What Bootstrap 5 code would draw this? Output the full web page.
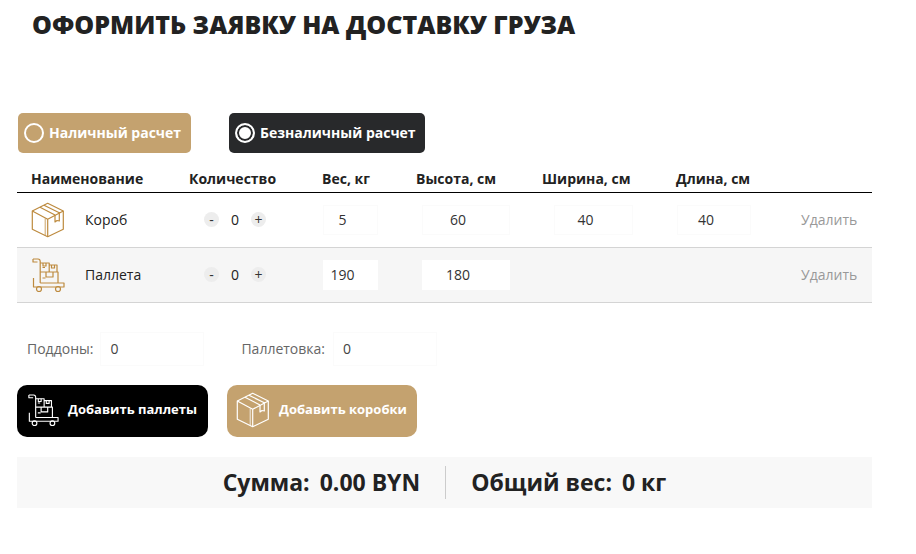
<!DOCTYPE html>
<html lang="ru">
<head>
    <meta charset="UTF-8">
    <meta name="viewport" content="width=device-width, initial-scale=1.0">
    <title>Оформить заявку</title>
    <link href="https://cdn.jsdelivr.net/npm/bootstrap@5.3.0/dist/css/bootstrap.min.css" rel="stylesheet">
    <style>
        body {
            font-family: "Open Sans", sans-serif;
            font-size: 14px;
            color: #222;
            background: #fff;
        }
        .order-page {
            width: 855px;
            margin-left: 17px;
        }
        .order-title {
            font-size: 25px;
            font-weight: 800;
            line-height: 33px;
            margin: 8px 0 0 15px;
            color: #222;
        }
        .pay-row {
            margin-top: 72px;
            gap: 38px;
        }
        .pay-btn {
            display: flex;
            align-items: center;
            height: 40px;
            border-radius: 5px;
            padding: 0 0 0 6px;
            color: #fff;
            font-weight: 700;
            font-size: 14px;
            gap: 5px;
            white-space: nowrap;
            line-height: 19px;
        }
        .pay-btn b { font-weight: 700; margin-top: -1px; }
        .pay-tan { margin-left: 1px; width: 173px; background: #c4a26f; }
        .pay-dark { width: 196px; background: #28292b; }
        .pay-ring {
            width: 20px;
            height: 20px;
            border-radius: 50%;
            border: 2px solid #fff;
            flex-shrink: 0;
        }
        .pay-dark .pay-ring {
            background: #fff;
            box-shadow: inset 0 0 0 2px #28292b;
        }
        .cargo-table {
            table-layout: fixed;
            width: 855px;
            margin: 15px 0 0;
            --bs-table-bg: transparent;
            color: #222;
        }
        .cargo-table th {
            font-size: 14px;
            font-weight: 700;
            padding: 0 0 2px 14px;
            height: 24px;
            border-bottom: 1px solid #000;
            vertical-align: middle;
            white-space: nowrap;
            color: #222;
        }
        .cargo-table td {
            height: 55px;
            padding: 0 0 0 14px;
            vertical-align: middle;
            border-bottom: 1px solid #d4d4d4;
        }
        .cargo-table tr.row-shade td { background: #f6f6f6; }
        .item-name { gap: 20px; }
        .item-icon { color: #bd8a3e; flex-shrink: 0; }
        .qty-box { margin-left: 15px; width: 62px; justify-content: space-between; }
        .qty-btn {
            width: 15px;
            height: 15px;
            border-radius: 50%;
            background: #ededed;
            border: 0;
            padding: 0;
            font-size: 14px;
            line-height: 15px;
            color: #333;
            text-align: center;
        }
        .dim-input {
            display: block;
            height: 30px;
            background: #fff;
            border: 1px solid #fbfbfb;
            padding: 0 16px 0 0;
            text-align: center;
            font-size: 14px;
            color: #333;
            outline: 0;
        }
        .row-shade .dim-input { border-color: #fff; }
        .dim-w { width: 55px; margin-left: 1px; }
        .dim-h { width: 88px; margin-left: 6px; }
        .dim-s { width: 79px; margin-left: 12px; }
        .dim-l { width: 74px; margin-left: 1px; }
        .del-link { color: #999; text-decoration: none; }
        .pallet-row {
            margin-top: 29px;
            margin-left: 10px;
            align-items: center;
        }
        .pallet-label { color: #666; margin-right: 7px; }
        .pallet-input {
            height: 34px;
            width: 104px;
            border: 1px solid #fbfbfb;
            background: #fff;
            padding: 0 0 0 9px;
            font-size: 14px;
            color: #444;
            outline: 0;
        }
        .pallet-gap { margin-left: 37px; margin-right: 8px; }
        .add-row { margin-top: 19px; gap: 19px; }
        .add-btn {
            height: 52px;
            border-radius: 10px;
            border: 0;
            color: #fff;
            font-size: 13px;
            font-weight: 700;
            display: flex;
            align-items: center;
            padding: 0 0 2px;
        }
        .add-black { width: 191px; background: #000; padding-left: 10px; gap: 9px; }
        .add-tan { width: 190px; background: #c4a26f; padding-left: 9px; gap: 9px; }
        .total-bar {
            margin-top: 20px;
            height: 51px;
            background: #f8f8f8;
            font-size: 23px;
            font-weight: 700;
            color: #222;
        }
        .total-label { margin-right: 10px; }
        .total-sep {
            width: 1px;
            height: 33px;
            background: #ccc;
            margin: 0 25px;
        }
    </style>
</head>
<body>
    <svg width="0" height="0" class="position-absolute">
        <symbol id="icon-box" viewBox="0 0 34 36">
            <g fill="none" stroke="currentColor" stroke-width="1.200" stroke-linejoin="round">
                <path d="M16.700 1.300 1.300 9v18.300l15.400 7.400 15.600-7.400V9z"/>
                <path d="M1.300 9l15.400 8.300L32.300 9M16.700 17.300v17.400"/>
                <path d="M14.300 16.500v16.800" stroke-opacity=".55" stroke-width="1.500"/>
                <path d="M9 5.300 24 13M13 3.300l15.300 7.400"/>
                <path d="M24 13v7l2-1.500 2.300.5v-9"/>
            </g>
        </symbol>
        <symbol id="icon-cart" viewBox="0 0 34 36">
            <g fill="none" stroke="currentColor" stroke-width="1.200" stroke-linejoin="round">
                <path d="M2 2h5c1.500 0 2.200 1 2.200 2.500V26"/>
                <path d="M2 2v3h4.500"/>
                <path d="M2.500 21v9H33v-4H9.200"/>
                <circle cx="8" cy="32" r="2.500"/>
                <circle cx="27" cy="32" r="2.500"/>
                <path d="M9.200 15H27v11M9.200 6h9v9M18.200 8H26v7M15 15v5h7v-5"/>
                <path d="M12 6v3h3V6M20.500 8v3h3V8M11.500 10.500h2.500M11.500 21h3"/>
            </g>
        </symbol>
    </svg>

    <div class="order-page">
        <h1 class="order-title">ОФОРМИТЬ ЗАЯВКУ НА ДОСТАВКУ ГРУЗА</h1>

        <div class="d-flex pay-row">
            <div class="pay-btn pay-tan"><span class="pay-ring"></span><b>Наличный расчет</b></div>
            <div class="pay-btn pay-dark"><span class="pay-ring"></span><b>Безналичный расчет</b></div>
        </div>

        <table class="table cargo-table">
            <colgroup>
                <col style="width: 158px">
                <col style="width: 133px">
                <col style="width: 94px">
                <col style="width: 126px">
                <col style="width: 134px">
                <col style="width: 125px">
                <col style="width: 85px">
            </colgroup>
            <thead>
                <tr>
                    <th>Наименование</th>
                    <th>Количество</th>
                    <th>Вес, кг</th>
                    <th>Высота, см</th>
                    <th>Ширина, см</th>
                    <th>Длина, см</th>
                    <th></th>
                </tr>
            </thead>
            <tbody>
                <tr>
                    <td>
                        <div class="d-flex align-items-center item-name">
                            <svg class="item-icon" width="34" height="36"><use href="#icon-box"/></svg>
                            <span>Короб</span>
                        </div>
                    </td>
                    <td>
                        <div class="d-flex align-items-center qty-box">
                            <button class="qty-btn">-</button><span>0</span><button class="qty-btn">+</button>
                        </div>
                    </td>
                    <td><input class="dim-input dim-w" type="text" value="5"></td>
                    <td><input class="dim-input dim-h" type="text" value="60"></td>
                    <td><input class="dim-input dim-s" type="text" value="40"></td>
                    <td><input class="dim-input dim-l" type="text" value="40"></td>
                    <td><a class="del-link" href="#">Удалить</a></td>
                </tr>
                <tr class="row-shade">
                    <td>
                        <div class="d-flex align-items-center item-name">
                            <svg class="item-icon" width="34" height="36"><use href="#icon-cart"/></svg>
                            <span>Паллета</span>
                        </div>
                    </td>
                    <td>
                        <div class="d-flex align-items-center qty-box">
                            <button class="qty-btn">-</button><span>0</span><button class="qty-btn">+</button>
                        </div>
                    </td>
                    <td><input class="dim-input dim-w" type="text" value="190"></td>
                    <td><input class="dim-input dim-h" type="text" value="180"></td>
                    <td></td>
                    <td></td>
                    <td><a class="del-link" href="#">Удалить</a></td>
                </tr>
            </tbody>
        </table>

        <div class="d-flex pallet-row">
            <span class="pallet-label">Поддоны:</span>
            <input class="pallet-input" type="text" value="0">
            <span class="pallet-label pallet-gap">Паллетовка:</span>
            <input class="pallet-input" type="text" value="0">
        </div>

        <div class="d-flex add-row">
            <button class="add-btn add-black">
                <svg width="32" height="34"><use href="#icon-cart"/></svg>
                Добавить паллеты
            </button>
            <button class="add-btn add-tan">
                <svg width="34" height="36"><use href="#icon-box"/></svg>
                Добавить коробки
            </button>
        </div>

        <div class="d-flex align-items-center justify-content-center total-bar">
            <span class="total-label">Сумма:</span>
            <span>0.00 BYN</span>
            <span class="total-sep"></span>
            <span class="total-label">Общий вес:</span>
            <span>0 кг</span>
        </div>
    </div>

    <script src="https://cdn.jsdelivr.net/npm/bootstrap@5.3.0/dist/js/bootstrap.bundle.min.js"></script>
</body>
</html>
